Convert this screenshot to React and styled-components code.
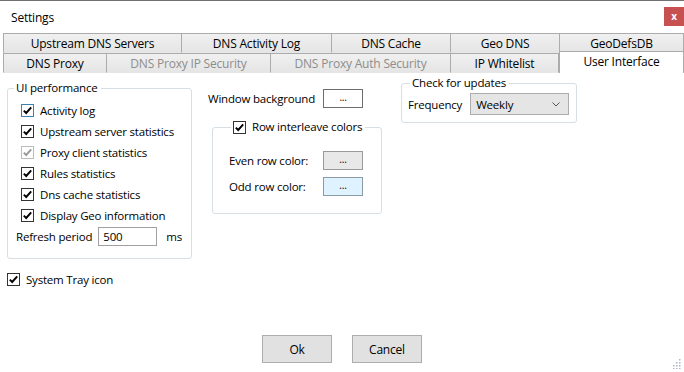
import React from 'react';
import styled, { createGlobalStyle } from 'styled-components';

const GlobalStyle = createGlobalStyle`
    html, body {
        margin: 0;
        padding: 0;
        background: #fff;
    }
    body {
        font-family: 'Open Sans', 'Noto Sans', sans-serif;
        font-size: 11.5px;
        letter-spacing: -0.2px;
        color: #000;
    }
`;

const Window = styled.div`
    position: relative;
    width: 684px;
    height: 372px;
    box-sizing: border-box;
    border-top: 1px solid #707070;
    display: flex;
    flex-direction: column;
    background: #fff;
    overflow: hidden;
`;

const TitleBar = styled.div`
    display: flex;
    align-items: center;
    justify-content: space-between;
    height: 32px;
    padding-left: 11px;
`;

const Title = styled.span`
    font-size: 12px;
`;

const CloseBtn = styled.div`
    display: flex;
    align-items: center;
    justify-content: center;
    width: 20px;
    height: 19px;
    margin-top: -2px;
    background: #c75050;
    color: #fff;
    font-size: 10px;
    font-weight: bold;
`;

const Tabs = styled.div`
    margin-left: 3px;
    display: flex;
    flex-direction: column;
`;

const TabRow = styled.div`
    display: flex;
    height: ${p => p.h}px;
    align-items: flex-end;
`;

const Tab = styled.div`
    box-sizing: border-box;
    width: ${p => p.w}px;
    height: ${p => (p.selected ? p.h + 2 : p.h)}px;
    display: flex;
    align-items: center;
    justify-content: center;
    border: 1px solid #acacac;
    border-left-width: ${p => (p.first || p.selected ? 1 : 0)}px;
    border-bottom: ${p => (p.selected ? 'none' : '1px solid #e6e6e6')};
    background: ${p => (p.selected ? '#fff' : 'linear-gradient(#f0f0f0, #e5e5e5)')};
    color: ${p => (p.disabled ? '#8d8d8d' : '#000')};
    font-size: 12px;
    white-space: nowrap;
    position: relative;
    padding-bottom: ${p => (p.selected ? 2 : 0)}px;
`;

const Content = styled.div`
    display: flex;
    align-items: flex-start;
    padding: 2px 0 0 7px;
`;

const Column = styled.div`
    display: flex;
    flex-direction: column;
    width: ${p => p.w}px;
    margin-top: ${p => p.top || 0}px;
    margin-right: ${p => p.gap || 0}px;
`;

const Group = styled.fieldset`
    margin: ${p => p.m || '0'};
    padding: ${p => p.pad || '0'};
    border: 1px solid #d5dfe5;
    border-radius: 3px;
    min-width: 0;
`;

const Legend = styled.legend`
    padding: 0 3px 0 2px;
    margin-left: 2px;
    line-height: 16px;
    display: flex;
    align-items: center;
    gap: 6px;
`;

const CheckRow = styled.label`
    display: flex;
    align-items: center;
    height: ${p => p.h || 21}px;
    gap: 6px;
    padding-left: ${p => p.indent || 0}px;
    margin-top: ${p => p.top || 0}px;
`;

const Box = styled.span`
    box-sizing: border-box;
    width: 13px;
    height: 13px;
    border: 1px solid ${p => (p.disabled ? '#bcbcbc' : p.focused ? '#3c7fb1' : '#333')};
    background: #fff;
    display: flex;
    align-items: center;
    justify-content: center;
    flex-shrink: 0;
`;

const Check = ({ disabled, focused }) => (
    <Box disabled={disabled} focused={focused}>
        <svg width="11" height="11" viewBox="0 0 11 11">
            <polyline
                points="1.8,5.6 4.2,8 9.2,2.4"
                fill="none"
                stroke={disabled ? '#9a9a9a' : '#000'}
                strokeWidth="1.9"
            />
        </svg>
    </Box>
);

const Checkbox = ({ label, disabled, focused, h, indent, top }) => (
    <CheckRow h={h} indent={indent} top={top}>
        <Check disabled={disabled} focused={focused} />
        <span>{label}</span>
    </CheckRow>
);

const FieldRow = styled.div`
    display: flex;
    align-items: center;
    height: ${p => p.h || 21}px;
    padding-left: ${p => p.indent || 0}px;
`;

const Label = styled.span`
    width: ${p => (p.w ? `${p.w}px` : 'auto')};
    flex-shrink: 0;
`;

const TextInput = styled.div`
    box-sizing: border-box;
    width: 59px;
    height: 19px;
    border: 1px solid #a0a0a0;
    padding: 0 4px;
    display: flex;
    align-items: center;
    margin: 0 9px 0 6px;
`;

const DotsBtn = styled.div`
    box-sizing: border-box;
    width: 40px;
    height: ${p => p.h || 19}px;
    border: 1px solid ${p => p.border};
    background: ${p => p.bg};
    display: flex;
    align-items: center;
    justify-content: center;
    font-size: 10px;
    padding-bottom: 2px;
    margin-left: ${p => p.ml || 0}px;
`;

const Select = styled.div`
    box-sizing: border-box;
    width: 99px;
    height: 22px;
    border: 1px solid #acacac;
    background: #e5e5e5;
    display: flex;
    align-items: center;
    justify-content: space-between;
    padding: 0 8px 0 5px;
    margin-left: 8px;
`;

const Footer = styled.div`
    margin-top: auto;
    display: flex;
    justify-content: center;
    gap: 20px;
    padding-bottom: 9px;
`;

const Button = styled.div`
    box-sizing: border-box;
    width: 70px;
    height: 28px;
    border: 1px solid #adadad;
    background: #e1e1e1;
    display: flex;
    align-items: center;
    justify-content: center;
    font-size: 12px;
`;

const Grip = styled.svg`
    position: absolute;
    right: 3px;
    bottom: 3px;
`;

const row1 = [
    ['Upstream DNS Servers', 179],
    ['DNS Activity Log', 150],
    ['DNS Cache', 119],
    ['Geo DNS', 109],
    ['GeoDefsDB', 124],
];

const row2 = [
    ['DNS Proxy', 104],
    ['DNS Proxy IP Security', 164, 'disabled'],
    ['DNS Proxy Auth Security', 180, 'disabled'],
    ['IP Whitelist', 108],
    ['User Interface', 125, 'selected'],
];

const checks = [
    ['Activity log', false, true],
    ['Upstream server statistics'],
    ['Proxy client statistics', true],
    ['Rules statistics'],
    ['Dns cache statistics'],
    ['Display Geo information'],
];

const App = () => (
    <>
        <GlobalStyle />
        <Window>
            <TitleBar>
                <Title>Settings</Title>
                <CloseBtn>x</CloseBtn>
            </TitleBar>
            <Tabs>
                <TabRow h={20}>
                    {row1.map(([name, w], i) => (
                        <Tab key={name} w={w} h={20} first={i === 0}>
                            {name}
                        </Tab>
                    ))}
                </TabRow>
                <TabRow h={20}>
                    {row2.map(([name, w, state], i) => (
                        <Tab
                            key={name}
                            w={w}
                            h={20}
                            first={i === 0}
                            disabled={state === 'disabled'}
                            selected={state === 'selected'}
                        >
                            {name}
                        </Tab>
                    ))}
                </TabRow>
            </Tabs>
            <Content>
                <Column w={185} top={5} gap={16}>
                    <Group pad="4px 0 11px 4px">
                        <Legend>UI performance</Legend>
                        {checks.map(([label, disabled, focused]) => (
                            <Checkbox key={label} label={label} disabled={disabled} focused={focused} indent={9} />
                        ))}
                        <FieldRow indent={4}>
                            <Label>Refresh period</Label>
                            <TextInput>500</TextInput>
                            <span>ms</span>
                        </FieldRow>
                    </Group>
                    <Checkbox label="System Tray icon" h={22} top={9} />
                </Column>
                <Column w={174} top={14} gap={19}>
                    <FieldRow h={18}>
                        <Label>Window background</Label>
                        <DotsBtn border="#6d6d6d" bg="#fff" ml={8}>...</DotsBtn>
                    </FieldRow>
                    <Group m="12px 0 0 4px" pad="12px 0 14px 16px">
                        <Legend>
                            <Check />
                            <span>Row interleave colors</span>
                        </Legend>
                        <FieldRow h={26}>
                            <Label w={94}>Even row color:</Label>
                            <DotsBtn border="#9a9a9a" bg="#e8e8e8">...</DotsBtn>
                        </FieldRow>
                        <FieldRow h={26}>
                            <Label w={94}>Odd row color:</Label>
                            <DotsBtn border="#8c9aa6" bg="#dff2ff">...</DotsBtn>
                        </FieldRow>
                    </Group>
                </Column>
                <Column w={176}>
                    <Group pad="1px 0 6px 6px">
                        <Legend>Check for updates</Legend>
                        <FieldRow h={24}>
                            <Label>Frequency</Label>
                            <Select>
                                <span>Weekly</span>
                                <svg width="8" height="5" viewBox="0 0 8 5">
                                    <polyline points="0.5,0.5 4,4 7.5,0.5" fill="none" stroke="#555" strokeWidth="1" />
                                </svg>
                            </Select>
                        </FieldRow>
                    </Group>
                </Column>
            </Content>
            <Footer>
                <Button>Ok</Button>
                <Button>Cancel</Button>
            </Footer>
            <Grip width="10" height="10" viewBox="0 0 10 10">
                {[[8, 0], [8, 3], [5, 3], [8, 6], [5, 6], [2, 6], [8, 9], [5, 9], [2, 9]].map(([x, y]) => (
                    <rect key={`${x}-${y}`} x={x} y={y} width="1.5" height="1.5" fill="#a8b4c8" />
                ))}
            </Grip>
        </Window>
    </>
);

export default App;
